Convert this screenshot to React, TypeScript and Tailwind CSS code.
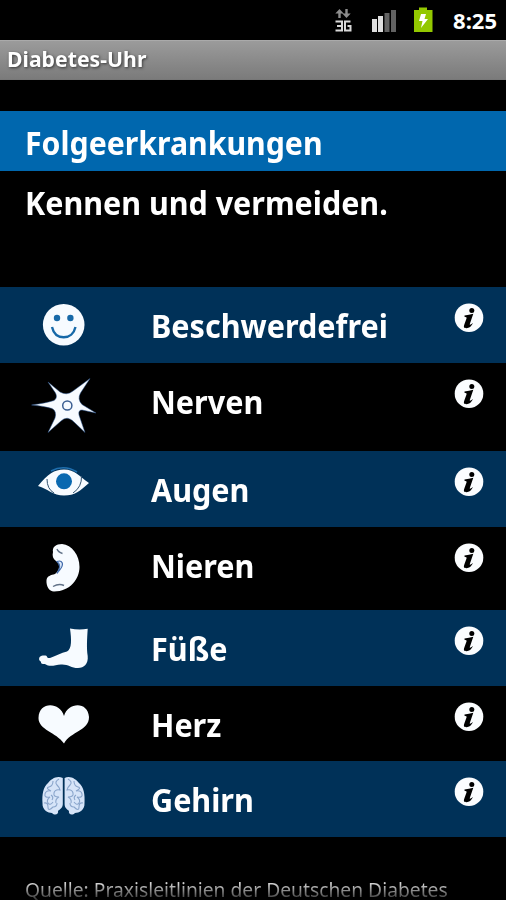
import type { ReactNode } from "react";

const smiley = (
  <>
    <circle cx="63.7" cy="37.7" r="20.8" fill="#f7fbff" />
    <circle cx="57" cy="31" r="3.2" fill="#1769a8" />
    <circle cx="70.4" cy="31" r="3.2" fill="#1769a8" />
    <path d="M52 40c1.500 6.500 6 10.300 11.700 10.300S74 46.500 75.500 40" fill="none" stroke="#1769a8" strokeWidth="2.400" />
  </>
);

const nerve = (
  <>
    <path
      d="M31.500 42Q46 40 54 37.500Q58 35 55.500 30L48 19L60 29Q67 33 73 28L90 15.500L80.500 30Q77 36 82 41.500L96 50L82 47Q78 47 79 52L85 69.500L74 59Q67 52 61 58L48 69.500L55 55Q57 48 52 45.500Q44 43 31.500 42Z"
      fill="#f7fbff"
      stroke="#24508c"
      strokeWidth="0.5"
    />
    <circle cx="67.300" cy="42.500" r="4.600" fill="#f7fbff" stroke="#3b5f92" strokeWidth="1.500" />
  </>
);

const eye = (
  <>
    <path d="M51 20Q64 13 77 21" fill="none" stroke="#1f6fae" strokeWidth="1.500" />
    <path d="M38 35C48 23 54 18.500 64 18.500C75 18.500 79 25 89 32C80 40 75 44.500 64 44.500C53 44.500 48 38 38 35Z" fill="#f7fbff" />
    <path d="M47 28Q47 38 54 42M81.500 25Q82 36 73 42" fill="none" stroke="#31526f" strokeWidth="1" />
    <circle cx="64" cy="30.300" r="8" fill="#0868b0" />
  </>
);

const kidney = (
  <>
    <path
      d="M53 25C52 20 56 17 62 17C72 18 79.500 28 79.500 40C79.500 52 70 64.500 54 64.500C49 64.500 46 59 46.500 53C47 49 51 48 55 47C60 43 61 37 56 34C53 32 52 29 53 25Z"
      fill="#f7fbff"
    />
    <path d="M57 34.500Q61 33 62.300 36C63.500 40 60 42 57 46.500C60 41 61 38 57 34.500Z" fill="#dce9f8" stroke="#416aaa" strokeWidth="1.200" />
    <path d="M57 22Q58 25 62.500 26.500M53 59.500Q59 56 64 58.500" fill="none" stroke="#607187" strokeWidth="1.400" />
  </>
);

const foot = (
  <path
    d="M70 18.500Q79 20.500 87.700 18.800C87 30 86.500 38 87.700 46C88.500 54 84 58 78 58C71 58 68 54 61 54.500C56 55 52 56.500 48 55.500C46 55 46 54 43 54C40 53.500 42 51.500 39.500 50.500C38 47 41 45 45.500 45.500C48 46 46 48.500 50 48C56 46 61 43 67 41.500C72 39 71.500 29 70 18.500Z"
    fill="#f7fbff"
  />
);

const heart = (
  <path
    d="M64 30C60 16 39 15 38.500 32C38.500 44 56 46 64 57.500C71 45 89 45 89 31C88 15 68 16 64 30Z"
    fill="#f7fbff"
  />
);

const brain = (
  <>
    <path
      d="M62.800 17C57 14 51 18 48 22C43 26 42 34 42.500 42C42 49 48 52 52 52C55 55 59 53 58 50C60 48 62.800 47 62.800 43ZM64.600 17C70 14 76 18 79 22C84 26 85 34 84.500 42C85 49 79 52 75 52C72 55 68 53 69 50C67 48 64.600 47 64.600 43Z"
      fill="#d6e4f8"
    />
    <path
      d="M59 18q-5 3-2 6t3 5q-5-1-6 3t5 4q-4 2-3 6M53 20q0 5-4 6t2 4q-5-1-6 3t5 3q-4 3-2 6t5-1M44 42q4-1 4 4t5 0q4 0 4-4M51 34q3 2 1 5M68 18q5 3 2 6t-3 5q5-1 6 3t-5 4q4 2 3 6M74 20q0 5 4 6t-2 4q5-1 6 3t-5 3q4 3 2 6t-5-1M83 42q-4-1-4 4t-5 0q-4 0-4-4M76 34q-3 2-1 5"
      fill="none"
      stroke="#8aa5cb"
      strokeWidth="1.100"
    />
  </>
);

type Row = { label: string; icon: ReactNode; style: string };

const rows: Row[] = [
  { label: "Beschwerdefrei", icon: smiley, style: "h-[76px] bg-[#003158]" },
  { label: "Nerven", icon: nerve, style: "h-[88px]" },
  { label: "Augen", icon: eye, style: "h-[76px] bg-[#003158]" },
  { label: "Nieren", icon: kidney, style: "h-[83px]" },
  { label: "Füße", icon: foot, style: "h-[76px] bg-[#003158]" },
  { label: "Herz", icon: heart, style: "h-[75px]" },
  { label: "Gehirn", icon: brain, style: "h-[76px] bg-[#003158]" },
];

function StatusBar() {
  return (
    <div className="flex h-10 items-center justify-end pr-[9px]">
      <svg className="h-10 w-[120px]" viewBox="328 0 120 40">
        <path d="M338.300 18v-4.500h-3l4.200-4.500 4.200 4.500h-3V18zM345.300 9h2.400v4.500h3l-4.200 4.500-4.200-4.500h3z" fill="#8d8d8d" />
        <path d="M335.500 21.500h6.500v9h-6.500M337 26h5M350.500 21.500h-5.500v9h5.500v-4.500h-3" fill="none" stroke="#d8d8d8" strokeWidth="2" />
        <path d="M372 19h5v13h-5zM378 16h5v16h-5z" fill="#dedede" />
        <path d="M384.500 13h5v19h-5zM391 10h5v22h-5z" fill="#626262" />
        <path d="M414 10h5V7.500h8V10h5.500v22H414z" fill="#93c800" />
        <path d="M421 14h5l-1.500 5h3.500l-7 9 1.500-7h-3.500z" fill="#fff" />
      </svg>
      <span className="ml-[5px] text-[22px] leading-none font-bold text-white">8:25</span>
    </div>
  );
}

function InfoIcon() {
  return (
    <svg className="mt-4 mr-[22px] ml-auto h-[30px] w-[30px]" viewBox="0 0 30 30">
      <circle cx="15" cy="14.700" r="14.300" fill="#fbfdff" />
      <circle cx="17.800" cy="7.500" r="2.500" fill="#000" />
      <path d="M10.500 12.500Q15 12 19.300 10.800L15.800 21Q15.300 22.800 19 20Q16.500 25.200 12.500 25.200C9.500 25.200 9.500 23.500 10.500 21L12.500 15.500Q13 13.800 10.500 13.800Z" fill="#000" />
    </svg>
  );
}

export default function App() {
  return (
    <main className="h-[900px] w-full overflow-hidden bg-black font-['Noto_Sans','Open_Sans',sans-serif] text-white">
      <StatusBar />
      <header className="flex h-10 items-center border-t border-b border-t-[#aaa] border-b-[#777] bg-linear-to-b from-[#9b9b9b] to-[#7b7b7b] pb-[5px] pl-[7px]">
        <h1 className="origin-left scale-x-[0.965] text-[22px] leading-none font-bold [text-shadow:1px_1px_3px_#333]">
          Diabetes-Uhr
        </h1>
      </header>
      <h2 className="mt-[31px] flex h-[60px] items-center bg-[#0067ae] pt-[3px] pl-[25px] text-[32px] leading-none font-bold">
        <span className="origin-left scale-x-[0.945]">Folgeerkrankungen</span>
      </h2>
      <p className="flex h-[116px] items-start pt-4 pl-[25px] text-[32px] leading-none font-bold">
        <span className="origin-left scale-x-[0.952]">Kennen und vermeiden.</span>
      </p>
      <ul>
        {rows.map((row) => (
          <li key={row.label} className={`flex items-start ${row.style}`}>
            <svg className="h-[75px] w-[151px] shrink-0" viewBox="0 0 151 75">
              {row.icon}
            </svg>
            <span className="mt-[23px] origin-left scale-x-[0.955] text-[32px] leading-none font-bold whitespace-nowrap">
              {row.label}
            </span>
            <InfoIcon />
          </li>
        ))}
      </ul>
      <footer className="mt-[43px] flex pl-[25px] text-[20px] leading-[20px] whitespace-nowrap">
        <span className="origin-left scale-x-[0.963] bg-linear-to-b from-[#d0d0d0] from-20% to-[#333] bg-clip-text text-transparent">
          Quelle: Praxisleitlinien der Deutschen Diabetes
        </span>
      </footer>
    </main>
  );
}
